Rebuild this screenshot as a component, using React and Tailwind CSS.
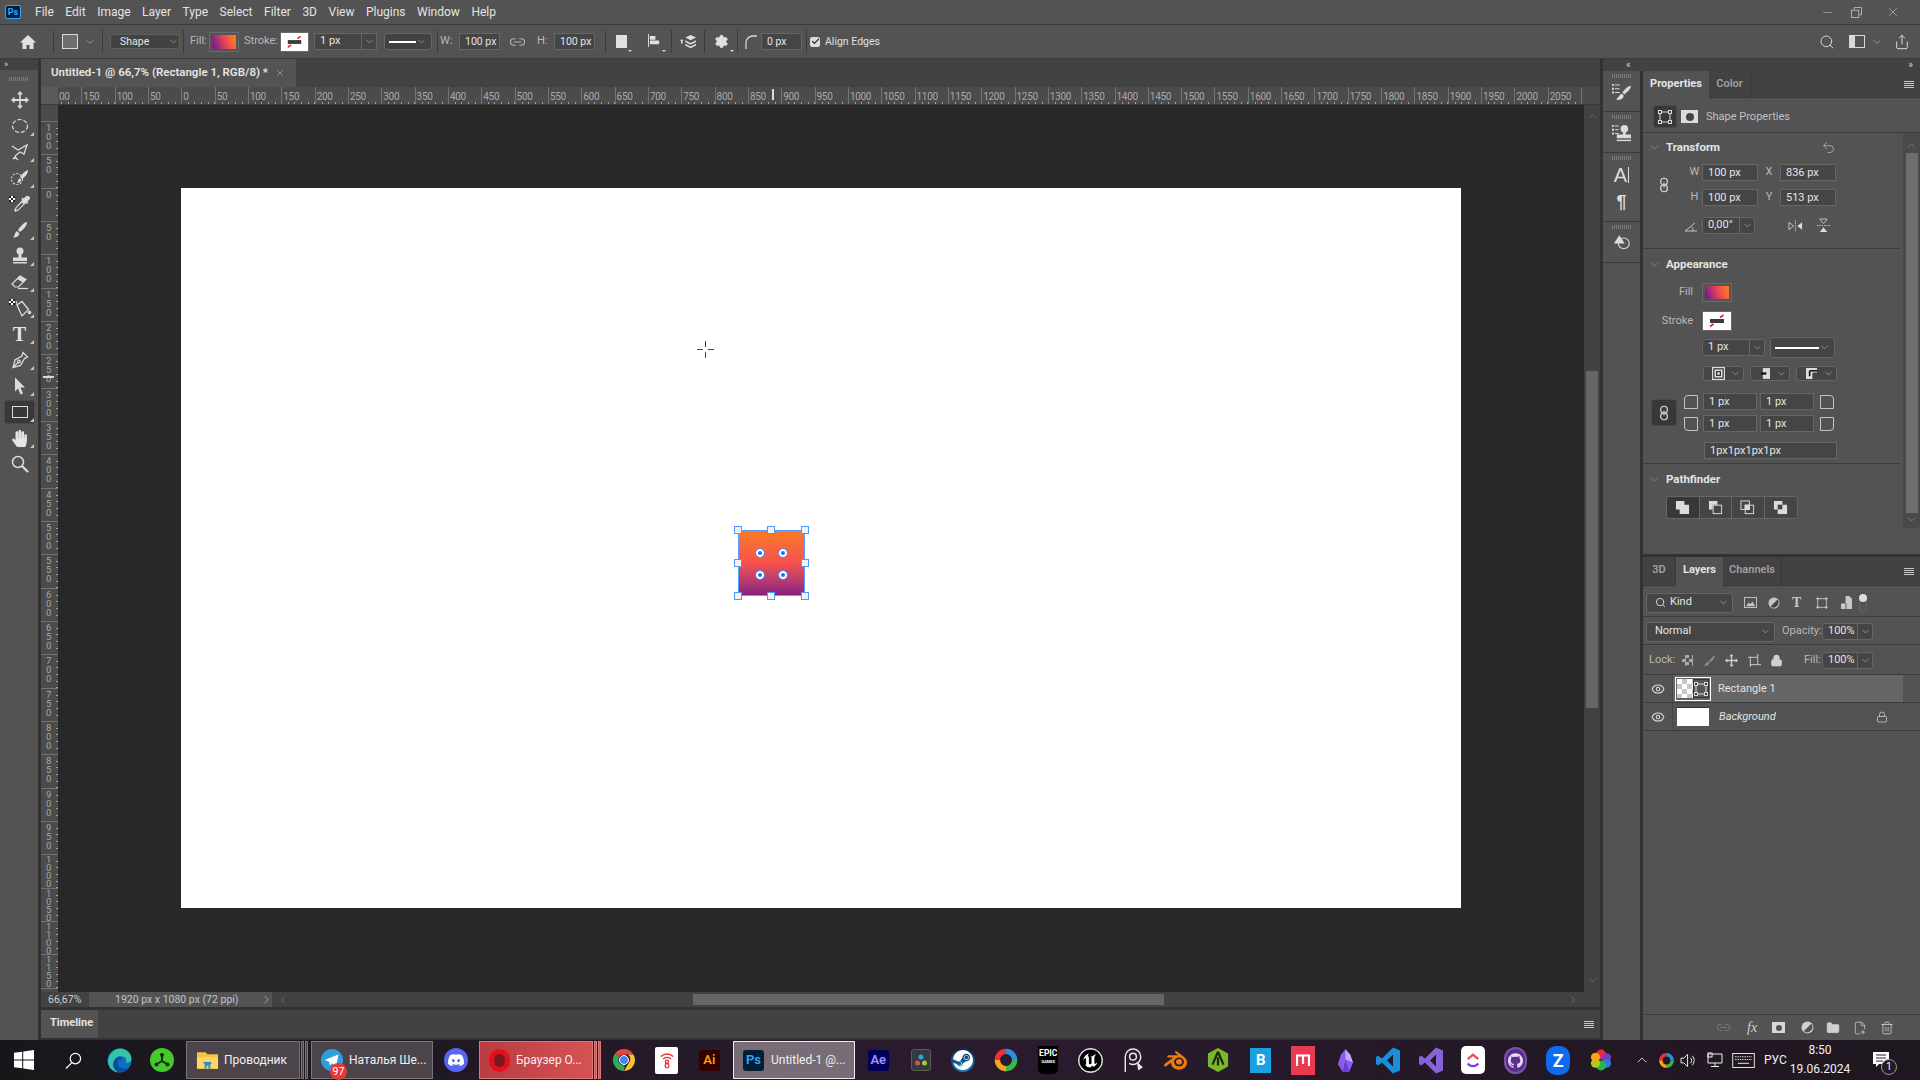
import { ChevronDown, ChevronUp, ChevronLeft, ChevronRight, Search, Undo2, Link2, Lock, Eye, Trash2, FolderClosed, FilePlus2, Settings, X, Minus, Share, Check } from "lucide-react"
import { SiDiscord, SiSteam, SiUnrealengine, SiBlender, SiGithub } from "react-icons/si"
import { FaHandPaper } from "react-icons/fa"

const menus = ["File", "Edit", "Image", "Layer", "Type", "Select", "Filter", "3D", "View", "Plugins", "Window", "Help"]
const hRuler = ["00", 150, 100, 50, 0, 50, 100, 150, 200, 250, 300, 350, 400, 450, 500, 550, 600, 650, 700, 750, 800, 850, 900, 950, 1000, 1050, 1100, 1150, 1200, 1250, 1300, 1350, 1400, 1450, 1500, 1550, 1600, 1650, 1700, 1750, 1800, 1850, 1900, 1950, 2000, 2050, ""]
const vRuler = [100, 50, 0, 50, 100, 150, 200, 250, 300, 350, 400, 450, 500, 550, 600, 650, 700, 750, 800, 850, 900, 950, 1000, 1050, 1100, 1150, ""]

function Sep() {
  return <div className="w-px h-[23px] bg-[#3c3c3c] shrink-0" />
}

function Chev({ size = 12, className = "text-[#c4c4c4]" }) {
  return <ChevronDown size={size} strokeWidth={1.2} className={className} />
}

function Grip() {
  return <div className="w-[20px] h-[4px] bg-[repeating-linear-gradient(90deg,#7a7a7a_0_1px,transparent_1px_2px)]" />
}

function MenuLines() {
  return (
    <div className="flex flex-col gap-[1px] w-[10px]">
      <div className="h-px bg-[#c8c8c8]" />
      <div className="h-px bg-[#c8c8c8]" />
      <div className="h-px bg-[#c8c8c8]" />
      <div className="h-px bg-[#c8c8c8]" />
    </div>
  )
}

function StrokeSwatch() {
  return (
    <svg viewBox="0 0 24 14" className="w-full h-full bg-white">
      <rect x="5" y="5" width="14" height="4" fill="#3c3c3c" />
      <path d="M15 3.5l3.5-2.5M5 12.5l3.5-2.5" stroke="#e0202a" strokeWidth="1.6" />
    </svg>
  )
}

function GradSwatch() {
  return <div className="w-full h-full bg-linear-[70deg,#7b2089_10%,#e8465a_55%,#f97a20_90%]" />
}

function Input({ children, className = "" }) {
  return (
    <div className={`border border-[#666666] bg-[#454545] text-[#e4e4e4] text-[11px] pl-[5px] pt-[1px] flex items-center shrink-0 ${className}`}>
      {children}
    </div>
  )
}

function Combo({ children, className = "" }) {
  return (
    <div className={`border border-[#666666] rounded-[3px] bg-[#454545] text-[#e4e4e4] text-[11px] flex items-center shrink-0 ${className}`}>
      {children}
    </div>
  )
}

function SplitCombo({ value, className = "", split = "w-[15px]" }) {
  return (
    <Combo className={className}>
      <span className="flex-1 pl-[5px]">{value}</span>
      <div className={`${split} h-full border-l border-[#666666] flex items-center justify-center`}>
        <Chev size={11} />
      </div>
    </Combo>
  )
}

function SectionHead({ title, className = "" }) {
  return (
    <div className={`h-[20px] flex items-center ${className}`}>
      <Chev size={13} className="text-[#9a9a9a] ml-[5px] mr-[5px]" />
      <span className="text-[11.5px] font-bold text-[#e4e4e4] pt-[1px]">{title}</span>
    </div>
  )
}

function ChainIcon() {
  return (
    <svg viewBox="0 0 12 18" className="w-[10px] h-[16px]" fill="none" stroke="#c8c8c8" strokeWidth="1.6">
      <rect x="2" y="1" width="8" height="8" rx="3.5" />
      <rect x="2" y="9" width="8" height="8" rx="3.5" />
      <path d="M6 6v6" />
    </svg>
  )
}

function CornerIcon({ d }) {
  return (
    <svg viewBox="0 0 14 14" className="w-[14px] h-[14px] shrink-0" fill="none" stroke="#c4c4c4" strokeWidth="1">
      <path d={d} />
    </svg>
  )
}

function PathBtn({ active, children, className = "" }) {
  return (
    <div className={`w-[33px] h-full flex items-center justify-center border-r border-[#666666] ${active ? "bg-[#383838]" : "bg-[#454545]"} ${className}`}>
      {children}
    </div>
  )
}

const toolSvg = "w-[20px] h-[20px]"

function Tool({ children, tri, active }) {
  return (
    <div className="h-[26px] w-full flex items-center justify-center relative pl-[1px]">
      {active && <div className="absolute left-[4px] right-[3px] top-px bottom-px rounded-[3px] bg-[#383838] border border-[#4a4a4a]" />}
      <div className="relative flex items-center justify-center">{children}</div>
      {tri && <div className="absolute right-[4px] bottom-[3px] w-0 h-0 border-l-[4px] border-l-transparent border-b-[4px] border-b-[#c8c8c8]" />}
    </div>
  )
}

function Checker({ x, y }) {
  return (
    <g>
      <rect x={x} y={y} width="6" height="6" fill="#fff" />
      <path d={`M${x} ${y}h2v2h-2zM${x + 4} ${y}h2v2h-2zM${x + 2} ${y + 2}h2v2h-2zM${x} ${y + 4}h2v2h-2zM${x + 4} ${y + 4}h2v2h-2z`} fill="#222" />
    </g>
  )
}

function Toolbar() {
  return (
    <div className="w-[38px] shrink-0 bg-[#535353] flex flex-col">
      <div className="h-[11px] bg-[#424242] text-[#d0d0d0] text-[9px] leading-[10px] pl-[4px]">»</div>
      <div className="h-[17px] flex items-center justify-center"><Grip /></div>
      <Tool>
        <svg viewBox="0 0 20 20" className={toolSvg} fill="#dcdcdc">
          <path d="M10 1l3 3.5h-2.2V9h4.7V6.8L19 10l-3.5 3.2V11h-4.7v4.5H13L10 19l-3-3.5h2.2V11H4.5v2.2L1 10l3.5-3.2V9h4.700V4.500H7z" />
        </svg>
      </Tool>
      <Tool tri>
        <svg viewBox="0 0 20 20" className={toolSvg} fill="none" stroke="#dcdcdc" strokeWidth="1.2" strokeDasharray="4 2">
          <ellipse cx="10" cy="10" rx="7.500" ry="6.500" />
        </svg>
      </Tool>
      <Tool tri>
        <svg viewBox="0 0 20 20" className={toolSvg} fill="none" stroke="#dcdcdc" strokeWidth="1.3">
          <path d="M2 4l6 4 9-5-3 9-4-2-5 4" />
          <path d="M6 14l-3 3 3-1 2 2" />
        </svg>
      </Tool>
      <Tool tri>
        <svg viewBox="0 0 20 20" className={toolSvg}>
          <circle cx="7" cy="11" r="5.500" fill="none" stroke="#dcdcdc" strokeWidth="1.1" strokeDasharray="2 1.500" />
          <path d="M18 2c0 4-3 7-6 9l-2-2c2-3 5-6 8-7z" fill="#dcdcdc" />
          <path d="M9.500 10l2 2c-.5 2-2.500 3-4.500 2.500 1.500-1 1-3.500 2.500-4.500z" fill="#dcdcdc" />
        </svg>
      </Tool>
      <Tool>
        <svg viewBox="0 0 24 20" className="w-[24px] h-[20px]">
          <Checker x={1} y={2} />
          <path d="M21 2.500c-1-1-2.500-1-3.300 0l-2 2-1-1-1.400 1.400 1 1L8 13c-1 1-1 2-1.500 3l-.5.500 1.500 1.500.5-.5c1-.5 2-.5 3-1.500l7-7 1 1 1.400-1.400-1-1 2-2c.9-.9.900-2.300 0-3.100z" fill="#dcdcdc" />
          <path d="M9 13.500l5-5 1.500 1.500-5 5c-1 .9-2 1-2.500 1.200 0-.6.200-1.700 1-2.700z" fill="#535353" />
        </svg>
      </Tool>
      <Tool tri>
        <svg viewBox="0 0 20 20" className={toolSvg} fill="#dcdcdc">
          <path d="M17 2c.5 3-4 8-7 10l-2-2c2-3 6-8 9-8z" />
          <path d="M7 11l2.500 2.500C9 16 6 18 3 17.500c2-1.500 1.500-5 4-6.500z" />
        </svg>
      </Tool>
      <Tool tri>
        <svg viewBox="0 0 20 20" className={toolSvg} fill="#dcdcdc">
          <circle cx="10" cy="5" r="3.500" />
          <path d="M8.500 8h3v3.500h5.500V15H3v-3.500h5.500z" />
          <rect x="3" y="16" width="14" height="1.500" />
        </svg>
      </Tool>
      <Tool tri>
        <svg viewBox="0 0 20 20" className={toolSvg}>
          <path d="M2 12l8-8 6 3.500-7.500 7.500H5z" fill="#535353" stroke="#dcdcdc" strokeWidth="1.2" />
          <path d="M7 7l3-3 6 3.500-3 3z" fill="#dcdcdc" />
          <path d="M8 16.500h10" stroke="#dcdcdc" strokeWidth="1.2" />
        </svg>
      </Tool>
      <Tool tri>
        <svg viewBox="0 0 24 20" className="w-[24px] h-[20px]">
          <Checker x={1} y={1} />
          <path d="M9 7l5-3.500 6.500 8L14 18z" fill="none" stroke="#dcdcdc" strokeWidth="1.300" />
          <path d="M9 7l-.5-4" stroke="#dcdcdc" strokeWidth="1" />
          <circle cx="21.500" cy="14.500" r="1.800" fill="#dcdcdc" />
        </svg>
      </Tool>
      <Tool tri>
        <span className="text-[#e4e4e4] text-[20px] leading-none font-bold font-['Liberation_Serif',serif]">T</span>
      </Tool>
      <Tool tri>
        <svg viewBox="0 0 20 20" className={toolSvg} fill="none" stroke="#dcdcdc" strokeWidth="1.300">
          <path d="M13 2.500l4.500 4.500-3 1.500-4 7-7.500 2 2-7.500 7-4z" />
          <path d="M3 17.500l5-5" />
          <circle cx="9" cy="11.500" r="1.300" />
        </svg>
      </Tool>
      <Tool tri>
        <svg viewBox="0 0 20 20" className={toolSvg} fill="#dcdcdc">
          <path d="M5 1.500l10 10h-4.500l2.500 6-2.500 1-2.500-6-3 3z" />
        </svg>
      </Tool>
      <Tool tri active>
        <div className="w-[16px] h-[12px] border-[1.5px] border-[#dcdcdc]" />
      </Tool>
      <Tool tri>
        <FaHandPaper size={17} color="#e4e4e4" />
      </Tool>
      <Tool>
        <svg viewBox="0 0 20 20" className={toolSvg} fill="none" stroke="#dcdcdc">
          <circle cx="8" cy="8" r="5.500" strokeWidth="1.500" />
          <path d="M12 12l6 6" strokeWidth="2.200" />
        </svg>
      </Tool>
    </div>
  )
}

function Tiny() {
  return <div className="self-end mb-[6px] ml-[1px] w-0 h-0 border-x-[2px] border-x-transparent border-t-[2px] border-t-[#d8d8d8]" />
}

function OptionsBar() {
  return (
    <div className="h-[33px] flex items-center text-[11px] text-[#c8c8c8] bg-[#535353]">
      <svg viewBox="0 0 16 16" className="ml-[20px] w-[16px] h-[16px]" fill="#e0e0e0">
        <path d="M8 1L0 8.500h2.500V15h4v-4h3v4h4V8.500H16z" />
      </svg>
      <div className="ml-[17px]"><Sep /></div>
      <div className="ml-[8px] w-[16px] h-[15px] bg-[#6f6f6f] border border-[#d8d8d8]" />
      <div className="ml-[6px]"><Chev /></div>
      <div className="ml-[6px]"><Sep /></div>
      <Combo className="ml-[7px] w-[70px] h-[15px] !bg-[#424242] !border-[#5f5f5f]">
        <span className="flex-1 pl-[9px] text-[10.5px]">Shape</span>
        <Chev size={11} />
      </Combo>
      <div className="ml-[3px]"><Sep /></div>
      <span className="ml-[6px] w-[14px] text-[#b8b8b8]">Fill:</span>
      <div className="ml-[5px] w-[30px] h-[20px] border border-[#6a6a6a] p-[2px]"><GradSwatch /></div>
      <span className="ml-[5px] w-[31px] text-[#b8b8b8]">Stroke:</span>
      <div className="ml-[5px] w-[29px] h-[20px] border border-[#6a6a6a] p-[2px] bg-white"><StrokeSwatch /></div>
      <SplitCombo value="1 px" className="ml-[5px] w-[63px] h-[17px] !rounded-none" />
      <Combo className="ml-[7px] w-[48px] h-[17px] px-[4px] !bg-[#424242]">
        <div className="flex-1 h-[2px] bg-white" />
        <Chev size={11} />
      </Combo>
      <div className="ml-[5px]"><Sep /></div>
      <span className="ml-[2px] w-[12px] text-[#b8b8b8]">W:</span>
      <Input className="ml-[7px] w-[41px] h-[17px] !text-[10.5px]">100 px</Input>
      <svg viewBox="0 0 16 10" className="ml-[10px] w-[15px] h-[10px]" fill="none" stroke="#b4b4b4" strokeWidth="1.200">
        <path d="M6 1.500H4a3.500 3.500 0 000 7h2M10 1.500h2a3.500 3.500 0 010 7h-2M4 5h8" />
      </svg>
      <span className="ml-[12px] w-[10px] text-[#b8b8b8]">H:</span>
      <Input className="ml-[7px] w-[41px] h-[17px] !text-[10.5px]">100 px</Input>
      <div className="ml-[10px]"><Sep /></div>
      <div className="ml-[10px] w-[11px] h-[13px] bg-[#e0e0e0]" />
      <Tiny />
      <svg viewBox="0 0 14 16" className="ml-[16px] w-[13px] h-[15px]" fill="#e0e0e0">
        <path d="M0 0h1v14H0zM2 2h6v4H2zM2 7h10v4H2z" />
      </svg>
      <Tiny />
      <div className="ml-[5px]"><Sep /></div>
      <svg viewBox="0 0 20 18" className="ml-[7px] w-[18px] h-[16px]" fill="#e0e0e0">
        <path d="M1 8l2-2.500L5 8H3.800v3H2.200V8z" />
        <path d="M13 1l6 3-6 3-6-3zM7 7l6 3 6-3v2l-6 3-6-3zM7 11l6 3 6-3v2l-6 3-6-3z" />
      </svg>
      <div className="ml-[7px]"><Sep /></div>
      <div className="ml-[9px] w-[15px]"><Settings size={15} fill="#e0e0e0" color="#e0e0e0" strokeWidth={1.500} /></div>
      <Tiny />
      <div className="ml-[3px]"><Sep /></div>
      <svg viewBox="0 0 12 14" className="ml-[7px] w-[12px] h-[14px]" fill="none" stroke="#d8d8d8" strokeWidth="1.300">
        <path d="M1 14V8c0-4 3-7 7-7h4" />
      </svg>
      <Input className="ml-[4px] w-[41px] h-[17px] !text-[10.5px]">0 px</Input>
      <div className="ml-[4px]"><Sep /></div>
      <div className="ml-[3px] w-[10px] h-[10px] rounded-[2px] bg-[#dcdcdc] flex items-center justify-center">
        <Check size={9} strokeWidth={3.500} color="#333333" />
      </div>
      <span className="ml-[5px] text-[10.5px] text-[#e0e0e0]">Align Edges</span>
      <div className="ml-auto flex items-center text-[#d8d8d8]">
        <Search size={16} strokeWidth={1.500} />
        <div className="ml-[14px] w-[16px] h-[13px] border border-[#d8d8d8] flex">
          <div className="w-[5px] bg-[#d8d8d8]" />
        </div>
        <div className="ml-[6px]"><Chev /></div>
        <Share size={16} strokeWidth={1.500} className="ml-[11px] mr-[10px]" />
      </div>
    </div>
  )
}

function HRuler() {
  return (
    <div className="h-[18px] flex relative bg-[#4b4b4b] border-b border-[#3a3a3a]">
      <div className="w-[17px] h-full bg-[#5a5a5a] shrink-0 relative z-10" />
      <div className="flex-1 flex overflow-hidden relative">
        {hRuler.map((n, i) => (
          <div
            key={i}
            className={`w-[33.33px] shrink-0 border-l border-[#727272] flex flex-col justify-between ${i === 0 ? "-ml-[10px]" : ""}`}
          >
            <span className={`mt-[4px] h-[11px] text-[10px] leading-[11px] text-[#a8a8a8] whitespace-nowrap tracking-[-0.3px] ${i === 0 ? "pl-[10px]" : "pl-[1px]"}`}>{n}</span>
            <div className="h-[2px] bg-[repeating-linear-gradient(90deg,transparent_0_5.67px,#a0a0a0_5.67px_6.67px)]" />
          </div>
        ))}
        <div className="absolute left-[714px] top-[2px] w-[2px] h-[11px] bg-[#d8d8d8]" />
      </div>
      <div className="w-[16px] bg-[#4b4b4b] shrink-0" />
    </div>
  )
}

function VRuler() {
  return (
    <div className="w-[17px] shrink-0 bg-[#4b4b4b] flex flex-col overflow-hidden relative">
      <div className="h-[16px] shrink-0" />
      {vRuler.map((n, i) => (
        <div key={i} className="h-[33.33px] shrink-0 border-t border-[#727272] flex justify-between">
          {/* one char per line, the ruler text stands upright */}
          <span className={`ml-[5px] w-[6px] pt-[1px] break-all text-[9.5px] text-[#a8a8a8] ${n >= 1000 ? "leading-[8px]" : "leading-[9px]"}`}>{n}</span>
          <div className="w-[2px] bg-[repeating-linear-gradient(180deg,transparent_0_5.67px,#a0a0a0_5.67px_6.67px)]" />
        </div>
      ))}
      <div className="absolute left-[2px] top-[271px] w-[11px] h-[2px] bg-[#d8d8d8]" />
    </div>
  )
}

function Handle({ className }) {
  return <div className={`absolute w-[8px] h-[8px] bg-[#f2f2f2] border border-[#4f96ff] ${className}`} />
}

function Dot({ className }) {
  return (
    <div className={`absolute w-[8px] h-[8px] rounded-full bg-[#1f6fe8] border-2 border-white outline-[1px] outline-[#4f96ff] ${className}`} />
  )
}

function Canvas() {
  return (
    <div className="flex-1 flex min-h-0">
      <VRuler />
      <div className="flex-1 bg-[#282828] pl-[123px] pt-[83px] relative overflow-hidden">
        <div className="w-[1280px] h-[720px] bg-white relative">
          {/* crosshair cursor */}
          <svg viewBox="0 0 17 17" className="absolute left-[516px] top-[153px] w-[17px] h-[17px]" stroke="#444444" strokeWidth="1">
            <path d="M8.500 0v6M8.500 11v6M0 8.500h6M11 8.500h6" />
          </svg>
          {/* selected rectangle on the document */}
          <div className="absolute left-[557px] top-[342px] w-[67px] h-[66px] border-[1.5px] border-[#5b9cff] bg-linear-to-b from-[#f97a20] via-[#f6504a] to-[#89207f]">
            <Handle className="-left-[5px] -top-[5px]" />
            <Handle className="left-[28px] -top-[5px]" />
            <Handle className="-right-[5px] -top-[5px]" />
            <Handle className="-left-[5px] top-[28px]" />
            <Handle className="-right-[5px] top-[28px]" />
            <Handle className="-left-[5px] -bottom-[5px]" />
            <Handle className="left-[28px] -bottom-[5px]" />
            <Handle className="-right-[5px] -bottom-[5px]" />
            <Dot className="left-[17px] top-[18px]" />
            <Dot className="left-[40px] top-[18px]" />
            <Dot className="left-[17px] top-[40px]" />
            <Dot className="left-[40px] top-[40px]" />
          </div>
        </div>
      </div>
      <div className="w-[16px] shrink-0 bg-[#424242] flex flex-col items-center relative">
        <ChevronUp size={13} strokeWidth={1.300} className="text-[#7a7a7a] mt-[5px]" />
        <div className="absolute left-[2px] top-[266px] w-[12px] h-[337px] bg-[#666666]" />
        <ChevronDown size={13} strokeWidth={1.300} className="text-[#7a7a7a] mt-auto mb-[5px]" />
      </div>
    </div>
  )
}

function StatusBar() {
  return (
    <div className="h-[15px] flex items-center bg-[#424242] text-[10.5px] text-[#d0d0d0]">
      <div className="w-[48px] pl-[7px]">66,67%</div>
      <div className="w-[183px] h-full bg-[#535353] flex items-center pl-[26px] relative">
        <span className="text-[#c4c4c4]">1920 px x 1080 px (72 ppi)</span>
        <ChevronRight size={13} strokeWidth={1.200} className="absolute right-[-1px] text-[#d0d0d0]" />
      </div>
      <ChevronLeft size={12} strokeWidth={1.200} className="ml-[5px] text-[#8a8a8a]" />
      <div className="ml-[404px] w-[471px] h-[11px] bg-[#666666]" />
      <ChevronRight size={12} strokeWidth={1.200} className="ml-[403px] text-[#8a8a8a]" />
    </div>
  )
}

function Dock() {
  return (
    <div className="w-[37px] shrink-0 bg-[#535353] flex flex-col">
      <div className="h-[41px] border-b border-[#383838] flex flex-col items-center pt-[3px]">
        <Grip />
        <svg viewBox="0 0 22 20" className="w-[21px] h-[19px] mt-[5px]" fill="#dcdcdc">
          <path d="M1 1h2v2H1zM1 5h2v2H1zM1 9h2v2H1zM4 1.500h5v1H4zM4 5.500h5v1H4zM4 9.500h5v1H4z" />
          <path d="M21 3c0 3-4 7-7 9l-2-2c2-3 6-7 9-7z" />
          <path d="M11 11l2.500 2.500C12.500 17 9 19 5 17c2.500-.5 3.500-4.500 6-6z" />
        </svg>
      </div>
      <div className="h-[41px] border-b border-[#383838] flex flex-col items-center pt-[3px]">
        <Grip />
        <svg viewBox="0 0 22 20" className="w-[21px] h-[19px] mt-[5px]" fill="#dcdcdc">
          <path d="M1 1h2v2H1zM1 5h2v2H1zM1 9h2v2H1zM4 1.500h4v1H4zM4 5.500h4v1H4zM4 9.500h4v1H4z" />
          <circle cx="14" cy="5" r="4" />
          <path d="M12.500 8h3v3H21v4H6v-4h6.500z" />
          <rect x="6" y="16.500" width="15" height="1.500" />
        </svg>
      </div>
      <div className="h-[69px] border-b border-[#383838] flex flex-col items-center pt-[3px]">
        <Grip />
        <div className="flex items-center mt-[4px] h-[22px]">
          <span className="text-[#dcdcdc] text-[20px] leading-none font-['Liberation_Sans',sans-serif]">A</span>
          <div className="w-px h-[16px] bg-[#dcdcdc] ml-px" />
        </div>
        <span className="mt-[5px] text-[#dcdcdc] text-[18px] leading-[22px] font-bold font-['Liberation_Sans',sans-serif]">¶</span>
      </div>
      <div className="h-[41px] border-b border-[#383838] flex flex-col items-center pt-[3px]">
        <Grip />
        <svg viewBox="0 0 20 18" className="w-[18px] h-[17px] mt-[5px]">
          <path d="M7 1l6 9H1z" fill="#dcdcdc" />
          <circle cx="12" cy="10" r="6" fill="none" stroke="#dcdcdc" strokeWidth="1.200" />
        </svg>
      </div>
    </div>
  )
}

function Properties() {
  return (
    <div className="h-[483px] bg-[#535353] flex flex-col shrink-0">
      <div className="h-[27px] bg-[#424242] border-b border-[#383838] flex shrink-0 relative">
        <div className="w-[66px] h-[27px] bg-[#535353] text-[11px] font-bold text-[#e4e4e4] flex items-center justify-center">Properties</div>
        <div className="w-[42px] border-r border-[#383838] text-[11px] font-semibold text-[#a0a0a0] flex items-center justify-center">Color</div>
        <div className="ml-auto mr-[6px] self-center"><MenuLines /></div>
      </div>
      <div className="h-[35px] border-b border-[#3c3c3c] flex items-center shrink-0 pl-[10px] pt-[3px]">
        <div className="w-[24px] h-[23px] rounded-[3px] bg-[#383838] border border-[#4a4a4a] flex items-center justify-center">
          <TransformIcon />
        </div>
        <div className="ml-[4px] w-[17px] h-[13px] bg-[#dcdcdc] flex items-center justify-center">
          <div className="w-[8px] h-[8px] rounded-full bg-[#454545]" />
        </div>
        <span className="ml-[8px] text-[11px] text-[#c0c0c0] pt-[2px]">Shape Properties</span>
      </div>
      <div className="flex flex-1 min-h-0">
        <div className="w-[257px] flex flex-col">
          {/* Transform */}
          <div className="h-[116px] border-b border-[#3c3c3c] pt-[4px]">
            <div className="flex items-center">
              <SectionHead title="Transform" />
              <Undo2 size={15} strokeWidth={1.500} className="ml-[101px] text-[#a8a8a8]" />
            </div>
            <div className="flex mt-[7px]">
              <div className="w-[44px] pl-[16px] flex items-center"><ChainIcon /></div>
              <div className="flex flex-col gap-[8px]">
                <div className="flex items-center h-[17px] text-[11px] text-[#b8b8b8]">
                  <span className="w-[15px] text-center">W</span>
                  <Input className="w-[56px] h-full">100 px</Input>
                  <span className="w-[22px] text-center">X</span>
                  <Input className="w-[56px] h-full">836 px</Input>
                </div>
                <div className="flex items-center h-[17px] text-[11px] text-[#b8b8b8]">
                  <span className="w-[15px] text-center">H</span>
                  <Input className="w-[56px] h-full">100 px</Input>
                  <span className="w-[22px] text-center">Y</span>
                  <Input className="w-[56px] h-full">513 px</Input>
                </div>
              </div>
            </div>
            <div className="flex items-center mt-[11px] h-[17px]">
              <svg viewBox="0 0 14 12" className="ml-[41px] w-[14px] h-[12px]" fill="none" stroke="#c4c4c4">
                <path d="M13 11H1L11 3M9 11c0-2-.5-3-1.500-4" />
              </svg>
              <SplitCombo value="0,00°" className="ml-[4px] w-[53px] h-full" />
              <svg viewBox="0 0 16 14" className="ml-[33px] w-[15px] h-[14px]">
                <path d="M1 3l5 4-5 4z" fill="none" stroke="#c8c8c8" />
                <path d="M15 3l-5 4 5 4z" fill="#dcdcdc" />
                <path d="M8 1v12" stroke="#c8c8c8" strokeDasharray="1.500 1" />
              </svg>
              <svg viewBox="0 0 14 16" className="ml-[14px] w-[13px] h-[15px]">
                <path d="M3 1l4 5 4-5z" fill="none" stroke="#c8c8c8" />
                <path d="M3 15l4-5 4 5z" fill="#dcdcdc" />
                <path d="M0 8h14" stroke="#c8c8c8" strokeDasharray="1.500 1" />
              </svg>
            </div>
          </div>
          {/* Appearance */}
          <div className="h-[215px] border-b border-[#3c3c3c] pt-[5px]">
            <SectionHead title="Appearance" />
            <div className="flex items-center mt-[9px] h-[19px]">
              <span className="w-[50px] text-right text-[11px] text-[#b8b8b8]">Fill</span>
              <div className="ml-[9px] w-[30px] h-full border border-[#6a6a6a] p-[2px]"><GradSwatch /></div>
            </div>
            <div className="flex items-center mt-[9px] h-[20px]">
              <span className="w-[50px] text-right text-[11px] text-[#b8b8b8]">Stroke</span>
              <div className="ml-[9px] w-[30px] h-full border border-[#6a6a6a] p-[2px] bg-white"><StrokeSwatch /></div>
            </div>
            <div className="flex items-center mt-[6px] h-[21px] pl-[59px]">
              <SplitCombo value="1 px" className="w-[63px] h-[17px]" />
              <Combo className="ml-[5px] w-[65px] h-full px-[4px]">
                <div className="flex-1 h-[2px] bg-white" />
                <Chev size={11} />
              </Combo>
            </div>
            <div className="flex items-center mt-[8px] h-[15px] pl-[60px] gap-[6px]">
              <Combo className="w-[41px] h-full justify-between px-[8px] !pr-[2px]">
                <svg viewBox="0 0 14 14" className="w-[13px] h-[13px] bg-[#dcdcdc]" fill="none" stroke="#222" strokeWidth="1.200">
                  <rect x="2" y="2" width="10" height="10" />
                  <rect x="5" y="5" width="4" height="4" />
                </svg>
                <Chev size={11} />
              </Combo>
              <Combo className="w-[40px] h-full justify-between px-[10px] !pr-[2px]">
                <svg viewBox="0 0 10 12" className="w-[9px] h-[11px]">
                  <rect x="2" y="0" width="8" height="12" fill="#dcdcdc" />
                  <path d="M0 6h6" stroke="#111" strokeWidth="2.500" />
                </svg>
                <Chev size={11} />
              </Combo>
              <Combo className="w-[41px] h-full justify-between px-[9px] !pr-[2px]">
                <svg viewBox="0 0 12 12" className="w-[11px] h-[11px]">
                  <path d="M0 0h12v5H7v7H0z" fill="#dcdcdc" />
                  <path d="M4 3h8M4 3v6" stroke="#111" strokeWidth="1.800" />
                </svg>
                <Chev size={11} />
              </Combo>
            </div>
            <div className="flex items-center mt-[12px] pl-[8px]">
              <div className="w-[26px] h-[27px] rounded-[3px] bg-[#383838] border border-[#4a4a4a] flex items-center justify-center"><ChainIcon /></div>
              <div className="ml-[7px] flex flex-col gap-[5px]">
                <div className="flex items-center h-[17px]">
                  <CornerIcon d="M13.500.5H4a3.500 3.500 0 00-3.500 3.500v9.500h13z" />
                  <Input className="ml-[5px] w-[54px] h-full">1 px</Input>
                  <Input className="ml-[3px] w-[54px] h-full">1 px</Input>
                  <div className="ml-[6px]"><CornerIcon d="M.5.5H10a3.500 3.500 0 013.500 3.500v9.500H.5z" /></div>
                </div>
                <div className="flex items-center h-[17px]">
                  <CornerIcon d="M13.500.5H.5V10a3.500 3.500 0 003.500 3.500h9.500z" />
                  <Input className="ml-[5px] w-[54px] h-full">1 px</Input>
                  <Input className="ml-[3px] w-[54px] h-full">1 px</Input>
                  <div className="ml-[6px]"><CornerIcon d="M.5.5h13V10a3.500 3.500 0 01-3.500 3.500H.5z" /></div>
                </div>
              </div>
            </div>
            <Input className="mt-[10px] ml-[61px] w-[133px] h-[17px]">1px1px1px1px</Input>
          </div>
          {/* Pathfinder */}
          <div className="pt-[5px]">
            <SectionHead title="Pathfinder" />
            <div className="mt-[7px] ml-[23px] h-[23px] w-[132px] flex rounded-[3px] overflow-hidden border border-[#666666]">
              <PathBtn active>
                <svg viewBox="0 0 16 16" className="w-[15px] h-[15px]" fill="#dcdcdc"><path d="M1 1h9v4h5v10H5v-5H1z" /></svg>
              </PathBtn>
              <PathBtn>
                <svg viewBox="0 0 16 16" className="w-[15px] h-[15px]"><path d="M1 1h9v4H5v5H1z" fill="#dcdcdc" /><rect x="5.500" y="5.500" width="9" height="9" fill="none" stroke="#dcdcdc" /></svg>
              </PathBtn>
              <PathBtn>
                <svg viewBox="0 0 16 16" className="w-[15px] h-[15px]" fill="none" stroke="#dcdcdc"><rect x="1" y="1" width="9" height="9" /><rect x="5.500" y="5.500" width="9" height="9" /><rect x="5.500" y="5.500" width="4.500" height="4.500" fill="#dcdcdc" /></svg>
              </PathBtn>
              <PathBtn className="border-r-0">
                <svg viewBox="0 0 16 16" className="w-[15px] h-[15px]" fill="#dcdcdc"><path d="M1 1h9v4h5v10H5v-5H1z" /><rect x="5" y="5" width="5" height="5" fill="#454545" /></svg>
              </PathBtn>
            </div>
          </div>
        </div>
        <div className="w-[3px]" />
        <div className="w-[17px] h-[395px] bg-[#4a4a4a] flex flex-col items-center">
          <ChevronUp size={13} strokeWidth={1.300} className="text-[#8a8a8a] mt-[6px]" />
          <div className="w-[12px] h-[360px] bg-[#6e6e6e] mt-[1px]" />
          <ChevronDown size={13} strokeWidth={1.300} className="text-[#8a8a8a]" />
        </div>
      </div>
    </div>
  )
}

function TransformIcon() {
  return (
    <svg viewBox="0 0 14 14" className="w-[14px] h-[14px]" fill="none" stroke="#dcdcdc">
      <rect x="2" y="2" width="10" height="10" />
      <g fill="#383838">
        <rect x="0.500" y="0.500" width="3" height="3" />
        <rect x="10.500" y="0.500" width="3" height="3" />
        <rect x="0.500" y="10.500" width="3" height="3" />
        <rect x="10.500" y="10.500" width="3" height="3" />
      </g>
    </svg>
  )
}

function Layers() {
  return (
    <div className="flex-1 bg-[#535353] flex flex-col mt-[3px] min-h-0">
      <div className="h-[29px] bg-[#424242] border-b border-[#383838] flex shrink-0">
        <div className="w-[33px] border-r border-[#383838] text-[11px] font-semibold text-[#a0a0a0] flex items-center justify-center pb-[2px]">3D</div>
        <div className="w-[47px] h-[29px] bg-[#535353] text-[11px] font-bold text-[#e4e4e4] flex items-center justify-center pb-[2px]">Layers</div>
        <div className="w-[59px] border-r border-[#383838] text-[11px] font-semibold text-[#a0a0a0] flex items-center justify-center pb-[2px]">Channels</div>
        <div className="ml-auto mr-[6px] self-center"><MenuLines /></div>
      </div>
      <div className="h-[31px] border-b border-[#3c3c3c] flex items-center shrink-0 pl-[3px] pt-[3px]">
        <Combo className="w-[87px] h-[20px] pl-[8px] pr-[3px]">
          <Search size={11} strokeWidth={2} className="text-[#e0e0e0]" />
          <span className="ml-[4px] flex-1">Kind</span>
          <Chev size={11} />
        </Combo>
        <svg viewBox="0 0 14 12" className="ml-[11px] w-[13px] h-[11px]">
          <rect x="0.500" y="0.500" width="13" height="11" fill="none" stroke="#c8c8c8" />
          <path d="M2 10l3-4 2 2 2-3 3 5z" fill="#c8c8c8" />
        </svg>
        <svg viewBox="0 0 12 12" className="ml-[11px] w-[12px] h-[12px]">
          <circle cx="6" cy="6" r="5.500" fill="#c8c8c8" />
          <path d="M9.500 2.500a5 5 0 01-7 7z" fill="#454545" />
        </svg>
        <span className="ml-[12px] w-[13px] text-[14px] leading-none font-bold text-[#c8c8c8] font-['Liberation_Serif',serif]">T</span>
        <svg viewBox="0 0 14 14" className="ml-[11px] w-[12px] h-[12px]" fill="none" stroke="#c8c8c8"><rect x="2" y="2" width="10" height="10" /><path d="M0 2h4M2 0v4M10 2h4M12 0v4M0 12h4M2 10v4M10 12h4M12 10v4" /></svg>
        <svg viewBox="0 0 12 14" className="ml-[13px] w-[11px] h-[13px]" fill="#c8c8c8"><path d="M5 0h4l3 3v11H6V8H5zM0 8h5v6H0z" /></svg>
        <div className="ml-[7px] w-[8px] h-[18px] rounded-full border border-[#666666] relative">
          <div className="absolute -left-px -top-px w-[8px] h-[8px] rounded-full bg-[#dcdcdc]" />
        </div>
      </div>
      <div className="h-[28px] border-b border-[#3c3c3c] flex items-center shrink-0 pl-[3px] pt-[2px]">
        <Combo className="w-[129px] h-[20px] pl-[8px] pr-[3px]">
          <span className="flex-1">Normal</span>
          <Chev size={11} />
        </Combo>
        <span className="ml-[7px] w-[37px] whitespace-nowrap text-[11px] text-[#b8b8b8]">Opacity:</span>
        <SplitCombo value="100%" className="ml-[3px] w-[51px] h-[17px]" />
      </div>
      <div className="h-[30px] border-b border-[#3c3c3c] flex items-center shrink-0 pl-[6px] pt-[1px] text-[11px] text-[#b8b8b8]">
        <span className="w-[26px]">Lock:</span>
        <div className="ml-[7px] w-[11px] h-[11px] bg-[conic-gradient(#a8a8a8_25%,#555555_0_50%,#a8a8a8_0_75%,#555555_0)] bg-[length:7px_7px]" />
        <svg viewBox="0 0 14 14" className="ml-[10px] w-[13px] h-[13px]" fill="#8c8c8c">
          <path d="M13 1c0 3-3 6-5 8L6.500 7.500C8 5.500 11 2 13 1zM5.500 8L7 9.500C6.500 12 3.500 13.500 1 13c1.500-1 1.500-4 4.500-5z" />
        </svg>
        <svg viewBox="0 0 14 14" className="ml-[9px] w-[13px] h-[13px]" fill="#d0d0d0">
          <path d="M7 0l2.300 2.500H7.700v3.800h3.800V4.700L14 7l-2.500 2.300V7.700H7.700v3.800h1.600L7 14l-2.300-2.500h1.600V7.700H2.500v1.600L0 7l2.500-2.300v1.600h3.800V2.500H4.700z" />
        </svg>
        <svg viewBox="0 0 14 14" className="ml-[10px] w-[13px] h-[13px]" fill="none" stroke="#d0d0d0"><rect x="2.500" y="3.500" width="8" height="8" /><path d="M0 3.500h3M11 11.500h3M2.500 11v3M10.500 0v3" /></svg>
        <Lock size={13} fill="#d0d0d0" strokeWidth={1.500} className="ml-[9px] text-[#d0d0d0]" />
        <span className="ml-[21px] w-[15px]">Fill:</span>
        <SplitCombo value="100%" className="ml-[3px] w-[51px] h-[17px]" />
      </div>
      <div className="h-[28px] flex shrink-0 border-b border-[#3c3c3c]">
        <div className="w-[30px] flex items-center justify-center border-r border-[#454545]">
          <Eye size={14} fill="#535353" strokeWidth={1.800} className="text-[#dcdcdc]" />
        </div>
        <div className="w-[230px] bg-[#666666] flex items-center pl-[2px]">
          <div className="w-[36px] h-[24px] border-[1.5px] border-white flex items-center p-px">
            <div className="w-[16px] h-[19px] bg-[conic-gradient(#c8c8c8_25%,#ffffff_0_50%,#c8c8c8_0_75%,#ffffff_0)] bg-[length:10px_10px]" />
            <div className="w-[16px] h-[19px] bg-[#555555] flex items-center justify-center border border-[#333333]"><TransformIcon /></div>
          </div>
          <span className="ml-[7px] pt-[2px] text-[11px] text-[#e4e4e4]">Rectangle 1</span>
        </div>
      </div>
      <div className="h-[28px] flex shrink-0 border-b border-[#3c3c3c]">
        <div className="w-[30px] flex items-center justify-center border-r border-[#454545]">
          <Eye size={14} fill="#535353" strokeWidth={1.800} className="text-[#dcdcdc]" />
        </div>
        <div className="w-[230px] flex items-center pl-[4px]">
          <div className="w-[32px] h-[19px] bg-white border-t border-[#333333]" />
          <span className="ml-[10px] pt-[2px] text-[11px] italic text-[#e4e4e4]">Background</span>
          <Lock size={12} strokeWidth={1.500} className="ml-auto mr-[15px] text-[#d0d0d0]" />
        </div>
      </div>
      <div className="mt-auto h-[26px] border-t border-[#3c3c3c] flex items-center shrink-0 relative">
        <Link2 size={15} strokeWidth={1.500} className="ml-[73px] text-[#7c7c7c]" />
        <span className="ml-[16px] w-[14px] text-[14px] italic text-[#d0d0d0] font-['Liberation_Serif',serif]">fx</span>
        <div className="ml-[11px] w-[13px] h-[11px] bg-[#d8d8d8] flex items-center justify-center">
          <div className="w-[6px] h-[6px] rounded-full bg-[#535353]" />
        </div>
        <svg viewBox="0 0 12 12" className="ml-[16px] w-[13px] h-[13px]">
          <circle cx="6" cy="6" r="5.500" fill="#d0d0d0" />
          <path d="M9.500 2.500a5 5 0 01-7 7z" fill="#535353" />
        </svg>
        <FolderClosed size={14} fill="#d0d0d0" strokeWidth={1} className="ml-[12px] text-[#d0d0d0]" />
        <FilePlus2 size={14} strokeWidth={1.300} className="ml-[13px] text-[#d0d0d0]" />
        <Trash2 size={14} strokeWidth={1.400} className="ml-[13px] text-[#d0d0d0]" />
      </div>
    </div>
  )
}

function AppBtn({ children, className, extra }) {
  return (
    <div className="flex h-[38px] shrink-0">
      <div className={`h-full flex items-center border ${className}`}>{children}</div>
      {extra}
    </div>
  )
}

function TaskIcon({ children, className = "" }) {
  return <div className={`w-[42.5px] h-[40px] shrink-0 flex items-center justify-center relative ${className}`}>{children}</div>
}

function LogoBox({ label, className }) {
  return (
    <div className={`w-[21px] h-[21px] rounded-[3px] flex items-center justify-center text-[13px] font-semibold ${className}`}>{label}</div>
  )
}

function Chrome({ s = 24 }) {
  return (
    <svg viewBox="0 0 24 24" width={s} height={s}>
      <path d="M12 1a11 11 0 019.500 5.500H12a5.500 5.500 0 00-5 3.200L3.400 5A11 11 0 0112 1z" fill="#e8453c" />
      <path d="M21.500 6.500A11 11 0 0112 23l4.800-8.300a5.500 5.500 0 00-.8-8.200z" fill="#fbc02d" />
      <path d="M12 23A11 11 0 013.400 5L7 9.700a5.500 5.500 0 005.800 7.800L12 23z" fill="#34a853" />
      <circle cx="12" cy="12" r="4.500" fill="#4285f4" stroke="#fff" strokeWidth="1" />
    </svg>
  )
}

function Ring({ s = 26 }) {
  return (
    <svg viewBox="0 0 24 24" width={s} height={s} fill="none" strokeWidth="5">
      <path d="M4 12a8 8 0 018-8" stroke="#e8353a" />
      <path d="M12 4a8 8 0 018 8" stroke="#2a8fe8" />
      <path d="M20 12a8 8 0 01-8 8" stroke="#3ab54a" />
      <path d="M12 20a8 8 0 01-8-8" stroke="#f8a51b" />
    </svg>
  )
}

function Taskbar() {
  return (
    <div className="h-[40px] shrink-0 flex items-center bg-linear-to-r from-[#17171b] via-[#2a1b2e] to-[#1f1720] text-[#f0f0f0]">
      <div className="w-[48px] flex items-center justify-center">
        <svg viewBox="0 0 20 20" className="w-[20px] h-[20px]" fill="#ffffff">
          <path d="M0 2.800l8.200-1.100v7.900H0zM9.200 1.500L20 0v9.600H9.200zM0 10.400h8.200v7.900L0 17.200zM9.200 10.400H20V20L9.200 18.500z" />
        </svg>
      </div>
      <div className="w-[50px] flex items-center justify-center">
        <svg viewBox="0 0 18 18" className="w-[17px] h-[17px]" fill="none" stroke="#ffffff" strokeWidth="1.300">
          <circle cx="11" cy="7" r="5.500" />
          <path d="M7 11.500L1 17.500" />
        </svg>
      </div>
      <TaskIcon>
        <svg viewBox="0 0 24 24" className="w-[25px] h-[25px]">
          <circle cx="12" cy="12" r="11.500" fill="#0c6fc4" />
          <path d="M1 12C2 5 8 .5 13 .5c6 0 10.500 5 10.500 10 0 3-3 4-5.500 3.500 2-4-2-7-6-6C8 9 6 12 6 16c0 3 2 6 5 7.500C5 23 1 18 1 12z" fill="#35c3a8" />
          <path d="M6 16c0-4 3-7 6-7.500 2 0 3 1 2.500 2.500-3-.5-5 1.500-4 5 1 3 5 5 10 3.500-3 3-6 4-9 4-3-1.500-5.500-4.500-5.500-7.500z" fill="#0a4d99" />
        </svg>
      </TaskIcon>
      <TaskIcon>
        <svg viewBox="0 0 24 24" className="w-[24px] h-[24px]">
          <circle cx="12" cy="12" r="12" fill="#45c92c" />
          <path d="M12 13V8M12 13l-5 3M12 13l5 3" stroke="#10300a" strokeWidth="2" />
          <circle cx="12" cy="7" r="2" fill="#10300a" />
          <circle cx="6.500" cy="16.500" r="2" fill="#10300a" />
          <circle cx="17.500" cy="16.500" r="2" fill="#10300a" />
        </svg>
      </TaskIcon>
      <div className="ml-[3px]">
        <AppBtn
          className="w-[114px] bg-[#4c444b] border-[#7a7479] pl-[9px]"
          extra={
            <>
              <div className="w-[3px] ml-[1px] bg-[#4c444b] border border-[#7a7479]" />
              <div className="w-[3px] ml-[1px] bg-[#4c444b] border border-[#7a7479]" />
            </>
          }
        >
          <svg viewBox="0 0 24 22" className="w-[23px] h-[22px]">
            <path d="M1 3h9l2 2h11v15H1z" fill="#f8c33f" />
            <path d="M1 8h22v12H1z" fill="#fbd768" />
            <path d="M9 20v-6h6v6h-2v-3h-2v3z" fill="#2b88d8" />
            <path d="M8 14h8" stroke="#2b88d8" strokeWidth="2" />
          </svg>
          <span className="ml-[5px] text-[12px] whitespace-nowrap">Проводник</span>
        </AppBtn>
      </div>
      <div className="ml-[3px]">
        <AppBtn className="w-[122px] bg-[#4c444b] border-[#7a7479] pl-[9px] relative">
          <svg viewBox="0 0 24 24" className="w-[22px] h-[22px]">
            <circle cx="12" cy="12" r="12" fill="#2f9fdc" />
            <path d="M4 12l15-6-2.500 13-4.500-3.500-2.500 2.500-.5-4-5-2z" fill="#ffffff" />
          </svg>
          <div className="absolute left-[18px] top-[21px] w-[17px] h-[17px] rounded-full bg-[#e53935] text-[10.5px] text-white flex items-center justify-center">97</div>
          <span className="ml-[6px] text-[12px] whitespace-nowrap">Наталья Ше...</span>
        </AppBtn>
      </div>
      <TaskIcon className="ml-[2px]">
        <div className="w-[24px] h-[24px] rounded-full bg-[#5865f2] flex items-center justify-center">
          <SiDiscord size={16} color="#ffffff" />
        </div>
      </TaskIcon>
      <div className="ml-[1.500px]">
        <AppBtn
          className="w-[114px] bg-linear-to-r from-[#b83c42] to-[#d65353] border-[#d97a7a] pl-[9px]"
          extra={
            <>
              <div className="w-[3px] ml-[1px] bg-[#d65353] border border-[#d97a7a]" />
              <div className="w-[3px] ml-[1px] bg-[#d65353] border border-[#d97a7a]" />
            </>
          }
        >
          <div className="w-[21px] h-[23px] rounded-full border-[5px] border-[#e3101c] bg-[#7a1a20]" />
          <span className="ml-[6px] text-[12px] whitespace-nowrap">Браузер О...</span>
        </AppBtn>
      </div>
      <TaskIcon className="ml-[2px]"><Chrome /></TaskIcon>
      <TaskIcon>
        <div className="w-[23px] h-[27px] rounded-[2px] bg-white flex items-center justify-center">
          <svg viewBox="0 0 16 20" className="w-[14px] h-[18px]" fill="none" stroke="#e8303a" strokeWidth="1.500">
            <path d="M1 6a10 10 0 0114 0M3.500 9a6 6 0 019 0" />
            <circle cx="8" cy="12" r="1.800" />
            <rect x="6" y="14" width="4" height="5" rx="2" />
          </svg>
        </div>
      </TaskIcon>
      <TaskIcon><LogoBox label="Ai" className="bg-[#330000] text-[#ff9a00]" /></TaskIcon>
      <div className="ml-[2.500px]">
        <AppBtn className="w-[122px] bg-[#786c77] border-[#ececec] pl-[9px]">
          <LogoBox label="Ps" className="bg-[#001e36] text-[#31a8ff]" />
          <span className="ml-[7px] text-[12px] whitespace-nowrap">Untitled-1 @...</span>
        </AppBtn>
      </div>
      <TaskIcon className="ml-[2px]"><LogoBox label="Ae" className="bg-[#00005b] text-[#9999ff]" /></TaskIcon>
      <TaskIcon>
        <div className="w-[20px] h-[22px] rounded-[3px] bg-[#333a40] border border-[#5b5f4a] flex items-center justify-center">
          <svg viewBox="0 0 14 14" className="w-[14px] h-[14px]">
            <circle cx="7" cy="4" r="2.500" fill="#3aa0e0" />
            <circle cx="3.500" cy="10" r="2.500" fill="#e0503a" />
            <circle cx="10.500" cy="10" r="2.500" fill="#a8c83a" />
          </svg>
        </div>
      </TaskIcon>
      <TaskIcon>
        <div className="w-[24px] h-[24px] rounded-full bg-linear-to-b from-[#0e2a52] to-[#1a7bb8] flex items-center justify-center">
          <SiSteam size={20} color="#ffffff" />
        </div>
      </TaskIcon>
      <TaskIcon><Ring /></TaskIcon>
      <TaskIcon>
        <div className="w-[20px] h-[28px] bg-black flex flex-col items-center pt-[2px] rounded-b-[5px]">
          <span className="text-[8.500px] leading-[11px] font-bold text-white">EPIC</span>
          <span className="text-[4px] leading-[6px] font-bold text-white">GAMES</span>
        </div>
      </TaskIcon>
      <TaskIcon>
        <div className="w-[25px] h-[25px] rounded-full bg-black border border-white flex items-center justify-center">
          <SiUnrealengine size={23} color="#ffffff" />
        </div>
      </TaskIcon>
      <TaskIcon>
        <svg viewBox="0 0 20 28" className="w-[20px] h-[27px]" fill="none" stroke="#e8e8e8" strokeWidth="1.500">
          <path d="M2 26V10a8 8 0 1116 0 8 8 0 01-12 7" />
          <circle cx="10" cy="10" r="3.500" />
          <path d="M15 17l4 4-3 2z" fill="#e8e8e8" />
        </svg>
      </TaskIcon>
      <TaskIcon>
        <SiBlender size={23} color="#e87d0d" />
      </TaskIcon>
      <TaskIcon>
        <svg viewBox="0 0 24 28" className="w-[22px] h-[26px]">
          <path d="M12 1l11 6v14l-11 6-11-6V7z" fill="#79b82a" />
          <path d="M12 5l6 14M12 5L6 19M12 11v9" stroke="#1e2a10" strokeWidth="2.500" fill="none" />
        </svg>
      </TaskIcon>
      <TaskIcon>
        <div className="w-[21px] h-[25px] bg-[#1ba1e2] flex items-center justify-center text-white text-[15px] font-bold">B</div>
      </TaskIcon>
      <TaskIcon>
        <div className="w-[24px] h-[29px] bg-[#ea3a52] flex items-center justify-center">
          <svg viewBox="0 0 14 12" className="w-[14px] h-[12px]" fill="none" stroke="#ffffff" strokeWidth="2.200">
            <path d="M1 12V1.500h12V12M7 2v8" />
          </svg>
        </div>
      </TaskIcon>
      <TaskIcon>
        <svg viewBox="0 0 18 26" className="w-[17px] h-[25px]">
          <path d="M9 1l5 6 3 8-4 10H6L1 17l3-10z" fill="#8a5cf0" />
          <path d="M9 1l5 6 3 8-8-3z" fill="#c4a8ff" />
          <path d="M9 12l4 13H6z" fill="#6a3cd0" />
        </svg>
      </TaskIcon>
      <TaskIcon>
        <svg viewBox="0 0 24 28" className="w-[24px] h-[29px]">
          <path d="M17 1l7 3v20l-7 3L6 16 2 19l-2-1.500v-7L2 9l4 3zm0 7l-6 6 6 6z" fill="#1a8ed8" />
        </svg>
      </TaskIcon>
      <TaskIcon>
        <svg viewBox="0 0 24 28" className="w-[24px] h-[29px]">
          <path d="M17 1l7 3v20l-7 3L6 16 2 19l-2-1.500v-7L2 9l4 3zm0 7l-6 6 6 6z" fill="#8a62d8" />
        </svg>
      </TaskIcon>
      <TaskIcon>
        <div className="w-[24px] h-[28px] rounded-[5px] bg-white flex items-center justify-center">
          <svg viewBox="0 0 16 18" className="w-[14px] h-[16px]" fill="none" strokeWidth="2.500">
            <path d="M2 8l6-5 6 5" stroke="#f0485a" />
            <path d="M2 13c3 4 9 4 12 0" stroke="#8930fd" />
          </svg>
        </div>
      </TaskIcon>
      <TaskIcon>
        <div className="w-[23px] h-[27px] rounded-full bg-[#5c2d8e] border-[2px] border-[#7d52ad] flex items-center justify-center">
          <SiGithub size={15} color="#e8dcf5" />
        </div>
      </TaskIcon>
      <TaskIcon>
        <div className="w-[24px] h-[29px] rounded-[10px] bg-[#0b6cf0] flex items-center justify-center text-white text-[18px] font-bold">Z</div>
      </TaskIcon>
      <TaskIcon>
        <svg viewBox="0 0 24 24" className="w-[22px] h-[22px]">
          <circle cx="12" cy="6" r="5.500" fill="#e8303a" />
          <circle cx="18" cy="9.500" r="5" fill="#7a3cc8" />
          <circle cx="18" cy="15.500" r="5" fill="#2a78e0" />
          <circle cx="12" cy="18" r="5.500" fill="#2ab54a" />
          <circle cx="6" cy="15.500" r="5" fill="#a8cc20" />
          <circle cx="6" cy="9" r="5" fill="#f8a51b" />
        </svg>
      </TaskIcon>
      <div className="ml-[12px] flex items-center">
        <ChevronUp size={16} strokeWidth={1.200} />
        <div className="ml-[8px]"><Ring s={17} /></div>
        <svg viewBox="0 0 18 16" className="ml-[5px] w-[17px] h-[15px]" fill="none" stroke="#f0f0f0" strokeWidth="1">
          <path d="M1 5.500h3l4-4v13l-4-4H1zM11 5a4 4 0 010 6M13 3a7 7 0 010 10" />
        </svg>
        <svg viewBox="0 0 16 16" className="ml-[10px] w-[16px] h-[16px]" fill="none" stroke="#f0f0f0" strokeWidth="1">
          <path d="M5 2h10v9H1V2h3M8 11v3M4 14.500h8" />
          <rect x="1" y="1" width="4" height="4" />
        </svg>
        <svg viewBox="0 0 24 16" className="ml-[9px] w-[23px] h-[15px]" fill="none" stroke="#f0f0f0" strokeWidth="1">
          <rect x="0.500" y="0.500" width="23" height="15" />
          <path d="M3 4h18M3 7h18" strokeDasharray="1.500 1" />
          <path d="M6 11h12" />
        </svg>
        <span className="ml-[9px] w-[24px] text-[12px]">РУС</span>
        <div className="ml-[5px] w-[54px] flex flex-col items-center text-[12px] leading-[19px] whitespace-nowrap">
          <span>8:50</span>
          <span>19.06.2024</span>
        </div>
        <div className="ml-[26px] relative w-[16px] h-[16px]">
          <svg viewBox="0 0 16 16" className="w-[16px] h-[16px]">
            <path d="M0 0h16v12H6l-3 3v-3H0z" fill="#ffffff" />
            <path d="M3 3h10M3 6h10M3 9h7" stroke="#222" />
          </svg>
          <div className="absolute left-[8px] top-[7px] w-[16px] h-[16px] rounded-full border border-[#9a9a9a] bg-[#221a22] flex items-center justify-center text-[10.500px]">1</div>
        </div>
      </div>
    </div>
  )
}

export default function App() {
  return (
    <div className="w-[1920px] h-[1080px] overflow-hidden flex flex-col bg-[#323232] font-['Roboto',sans-serif]">
      {/* menu bar */}
      <div className="h-[24px] bg-[#535353] flex items-center shrink-0 border-b-0">
        <div className="ml-[5px] w-[16px] h-[14px] rounded-[2px] bg-[#001e36] border border-[#31a8ff] text-[#31a8ff] text-[9px] font-bold flex items-center justify-center leading-none">Ps</div>
        <div className="ml-[14px] flex gap-[11.5px] text-[12px] text-[#e4e4e4]">
          {menus.map((m) => <span key={m}>{m}</span>)}
        </div>
        <div className="ml-auto flex items-center text-[#b8b8b8]">
          <Minus size={13} strokeWidth={1.200} />
          <svg viewBox="0 0 12 12" className="ml-[17px] w-[11px] h-[11px]" fill="none" stroke="#b8b8b8">
            <rect x="0.500" y="3.500" width="8" height="8" />
            <path d="M3.500 3V.5h8v8H9" />
          </svg>
          <X size={14} strokeWidth={1.200} className="ml-[24px] mr-[20px]" />
        </div>
      </div>
      <div className="h-px bg-[#3a3a3a] shrink-0" />
      <OptionsBar />
      <div className="h-px bg-[#3a3a3a] shrink-0" />

      <div className="flex-1 flex min-h-0">
        <Toolbar />
        <div className="w-[3px] shrink-0" />
        {/* document column */}
        <div className="w-[1559px] shrink-0 flex flex-col">
          <div className="h-[28px] bg-[#424242] flex shrink-0">
            <div className="w-[255px] bg-[#535353] flex items-center pl-[10px] text-[11.5px] font-semibold text-[#e4e4e4]">
              <span className="whitespace-nowrap">Untitled-1 @ 66,7% (Rectangle 1, RGB/8) *</span>
              <X size={10} strokeWidth={1.200} className="ml-auto mr-[11px] text-[#c4c4c4]" />
            </div>
          </div>
          <HRuler />
          <Canvas />
          <StatusBar />
          <div className="h-[3px] shrink-0" />
          <div className="h-[28px] bg-[#424242] flex items-center shrink-0">
            <div className="w-[57px] h-full bg-[#535353] flex items-center pl-[9px] pb-[2px] text-[11px] font-bold text-[#e4e4e4]">Timeline</div>
            <div className="ml-auto mr-[6px]"><MenuLines /></div>
          </div>
          <div className="h-[2px] shrink-0" />
        </div>
        <div className="w-[3px] shrink-0" />
        {/* panels */}
        <div className="w-[317px] shrink-0 flex flex-col">
          <div className="h-[12px] bg-[#424242] flex items-center text-[#d0d0d0] text-[10px] leading-none shrink-0">
            <span className="ml-[23px]">«</span>
            <span className="ml-auto mr-[7px]">»</span>
          </div>
          <div className="flex-1 flex min-h-0">
            <Dock />
            <div className="w-[3px] shrink-0" />
            <div className="w-[277px] flex flex-col shrink-0">
              <Properties />
              <Layers />
            </div>
          </div>
        </div>
      </div>

      <Taskbar />
    </div>
  )
}
